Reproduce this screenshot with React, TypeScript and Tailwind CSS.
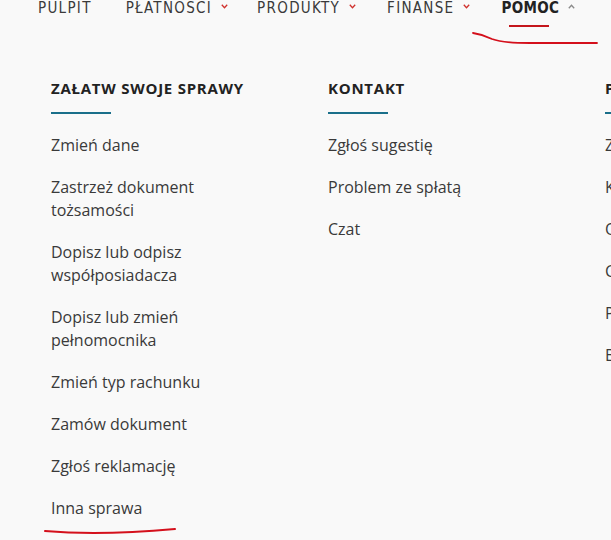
import React from "react";

const navItems = [
  { label: "PULPIT", chevron: false, ml: "" },
  { label: "PŁATNOŚCI", chevron: true, ml: "ml-[34px]" },
  { label: "PRODUKTY", chevron: true, ml: "ml-[29px]" },
  { label: "FINANSE", chevron: true, ml: "ml-[31px]" },
];

const columns = [
  {
    title: "ZAŁATW SWOJE SPRAWY",
    items: [
      "Zmień dane",
      "Zastrzeż dokument tożsamości",
      "Dopisz lub odpisz współposiadacza",
      "Dopisz lub zmień pełnomocnika",
      "Zmień typ rachunku",
      "Zamów dokument",
      "Zgłoś reklamację",
      "Inna sprawa",
    ],
  },
  {
    title: "KONTAKT",
    items: ["Zgłoś sugestię", "Problem ze spłatą", "Czat"],
  },
  {
    title: "PRZYDATNE INFORMACJE",
    items: ["Zastrzeż kartę", "Kursy walut", "Opłaty i prowizje", "Cennik", "Pytania i odpowiedzi", "Bezpieczeństwo"],
  },
];

function Chevron({ up = false, className = "" }: { up?: boolean; className?: string }) {
  return (
    <svg width="7" height="5" viewBox="0 0 7 5" className={className}>
      <path
        d={up ? "M0.8 4.2 L3.5 1.2 L6.2 4.2" : "M0.8 0.8 L3.5 3.8 L6.2 0.8"}
        fill="none"
        stroke="currentColor"
        strokeWidth="1.3"
      />
    </svg>
  );
}

export default function App() {
  return (
    <div className="relative w-[611px] h-[540px] overflow-hidden bg-[#f9f9f9] font-['Open_Sans',sans-serif]">
      {/* top navigation */}
      <nav className="flex items-start -mt-[2px] pl-[38px] font-['DejaVu_Sans_Condensed','DejaVu_Sans',sans-serif] text-[15px] leading-[20px] tracking-[1.3px] text-[#3a3a3a]">
        {navItems.map((n) => (
          <div key={n.label} className={`flex items-center gap-[9px] ${n.ml}`}>
            <span>{n.label}</span>
            {n.chevron && <Chevron className="text-[#d0312d] mt-[-3px]" />}
          </div>
        ))}
        <div className="relative ml-[31px] flex items-center gap-[9px]">
          <span className="font-bold text-[#222] tracking-[0.3px]">POMOC</span>
          <Chevron up className="text-[#8a8a8a] mt-[-3px]" />
          <div className="absolute left-[8px] top-[27px] w-[40px] h-[2px] bg-[#c4161c]" />
        </div>
      </nav>

      {/* menu columns */}
      <div className="flex pl-[51px] mt-[60px]">
        {columns.map((c) => (
          <div key={c.title} className="w-[277px] shrink-0">
            <h3 className="text-[15px] leading-[20px] font-bold tracking-[0.05em] text-[#222] whitespace-nowrap">
              {c.title}
            </h3>
            <div className="mt-[14px] w-[60px] h-[2px] bg-[#1a6f8a]" />
            <ul className="mt-[20px] flex flex-col gap-[19px] text-[16px] leading-[23px] text-[#3a3a3a]">
              {c.items.map((it) => (
                <li key={it} className="w-[190px]">
                  {it}
                </li>
              ))}
            </ul>
          </div>
        ))}
      </div>

      {/* hand-drawn red marks */}
      <svg className="absolute left-0 top-0 pointer-events-none" width="611" height="540">
        <path
          d="M473 33 C480 34 486 36 492 39 C500 42 512 43 530 43 L597 43"
          fill="none"
          stroke="#d4101c"
          strokeWidth="1.8"
          strokeLinecap="round"
        />
        <path
          d="M45 531 C80 534 130 533 175 529"
          fill="none"
          stroke="#d4101c"
          strokeWidth="2"
          strokeLinecap="round"
        />
      </svg>
    </div>
  );
}
